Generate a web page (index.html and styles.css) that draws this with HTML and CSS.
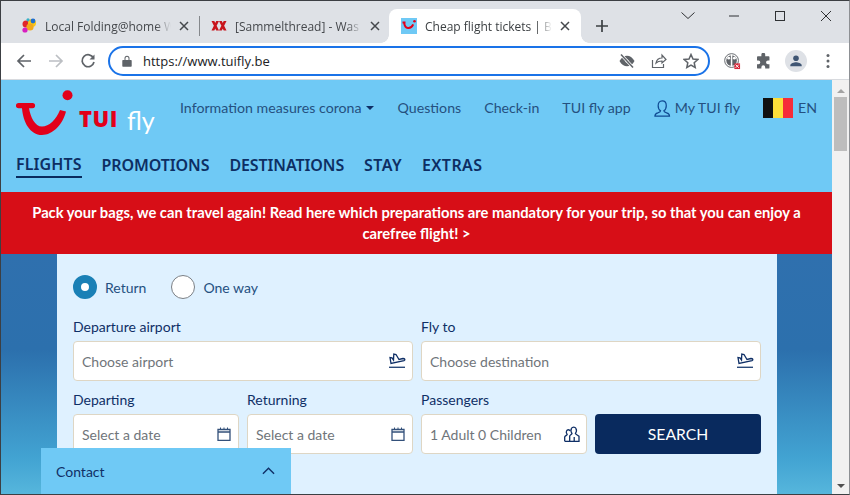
FILE: index.html
```html
<!DOCTYPE html>
<html lang="en">
<head>
<meta charset="utf-8">
<title>Cheap flight tickets</title>
<link rel="stylesheet" href="styles.css">
</head>
<body>
<div class="window">
  <div class="tabstrip">
    <div class="tab tab-one">
      <svg class="favicon" viewBox="0 0 16 16"><circle cx="5" cy="6" r="3.5" fill="#e0262a"/><circle cx="11" cy="5" r="4" fill="#f7c61a"/><circle cx="12" cy="3" r="2.4" fill="#1f6fd0"/><circle cx="9" cy="9" r="3.6" fill="#f2a91c"/><circle cx="4" cy="12" r="2.6" fill="#d81fc0"/><circle cx="7" cy="1.8" r="1.6" fill="#35b0c8"/></svg>
      <span class="tab-title">Local Folding@home Web Control</span>
      <svg class="tab-x" viewBox="0 0 10 10"><path d="M1 1l8 8M9 1l-8 8"/></svg>
    </div>
    <div class="tab-sep"></div>
    <div class="tab tab-two">
      <svg class="favicon" viewBox="0 0 16 16"><path d="M.5 3h2.800L8 12.500H5.200zM5.200 3H8L3.300 12.500H.5zM8 3h2.800l4.700 9.500h-2.800zM12.700 3h2.800l-4.700 9.500H8z" fill="#c8141c"/></svg>
      <span class="tab-title">[Sammelthread] - Was gibt es</span>
      <svg class="tab-x" viewBox="0 0 10 10"><path d="M1 1l8 8M9 1l-8 8"/></svg>
    </div>
    <div class="tab tab-active">
      <svg class="favicon" viewBox="0 0 16 16"><rect width="16" height="16" fill="#6fc9f5"/><path d="M1.500 4.500h3M3.200 4.800c.6 6.500 6.500 7 9 1.500" fill="none" stroke="#e2001a" stroke-width="2"/><circle cx="13.500" cy="3.300" r="1.300" fill="#e2001a"/></svg>
      <span class="tab-title">Cheap flight tickets | Book now</span>
      <svg class="tab-x" viewBox="0 0 10 10"><path d="M1 1l8 8M9 1l-8 8"/></svg>
    </div>
    <svg class="newtab" viewBox="0 0 12 12"><path d="M6 0v12M0 6h12"/></svg>
    <div class="winctl">
      <svg class="ctl" viewBox="0 0 46 30"><path d="M16.500 11.500l6.500 6 6.500-6" class="ctl-line"/></svg>
      <svg class="ctl" viewBox="0 0 46 30"><path d="M18 15h10" class="ctl-line"/></svg>
      <svg class="ctl" viewBox="0 0 46 30"><rect x="18.500" y="10.500" width="9" height="9" class="ctl-line"/></svg>
      <svg class="ctl" viewBox="0 0 46 30"><path d="M18 10l10 10M28 10l-10 10" class="ctl-line"/></svg>
    </div>
  </div>
  <div class="toolbar">
    <svg class="nav" viewBox="0 0 16 16"><path d="M15 8H2M8 2L2 8l6 6"/></svg>
    <svg class="nav nav-off" viewBox="0 0 16 16"><path d="M1 8h13M8 2l6 6-6 6"/></svg>
    <svg class="nav nav-last" viewBox="0 0 16 16"><path d="M13.500 5A6 6 0 1 0 14 9"/><path class="fill" d="M14.500 1.500v5h-5z"/></svg>
    <div class="omnibox">
      <svg class="lock" viewBox="0 0 10 12"><path d="M1 5h8a.7.7 0 0 1 .7.700V11a.7.7 0 0 1-.7.700H1A.7.7 0 0 1 .3 11V5.700A.7.7 0 0 1 1 5zM2.500 5V3.200a2.500 2.500 0 0 1 5 0V5H6.500V3.200a1.500 1.500 0 0 0-3 0V5z"/></svg>
      <span class="url">https://www.tuifly.be</span>
      <span class="omni-spacer"></span>
      <svg class="omni-icon" viewBox="0 0 16 16"><path d="M.5 8c2-3.700 4.700-5.300 7.500-5.300s5.500 1.600 7.500 5.300c-2 3.700-4.700 5.300-7.500 5.300S2.500 11.700.5 8z" fill="#5f6368"/><circle cx="8" cy="8" r="1.600" fill="#fff"/><path d="M2 1.500l12 13" stroke="#fff" stroke-width="3"/><path d="M2 1.500l12 13" stroke="#5f6368" stroke-width="1.500"/></svg>
      <svg class="omni-icon" viewBox="0 0 16 16"><path d="M1.500 7v7.500h11V11M5 10c.7-3.500 3-5 6-5V2l4 4.500L11 10V8c-2.500 0-4.500.5-6 2z" fill="none" stroke="#5f6368" stroke-width="1.200"/></svg>
      <svg class="omni-icon" viewBox="0 0 16 16"><path d="M8 1.500l2 4.500 4.800.5-3.600 3.200 1 4.800L8 12l-4.200 2.500 1-4.800L1.200 6.500 6 6z" fill="none" stroke="#5f6368" stroke-width="1.500"/></svg>
    </div>
    <svg class="ext ext-first" viewBox="0 0 18 18"><circle cx="8" cy="8" r="7.300" fill="#fff" stroke="#5f6368" stroke-width="1"/><circle cx="8" cy="8" r="5.600" fill="#5f6368"/><path d="M7.200 2v12h1.600V2z" fill="#fff"/><circle cx="5" cy="5.500" r="1.500" fill="#fff"/><circle cx="11" cy="5.500" r="1.500" fill="#fff"/><rect x="11" y="11" width="6" height="6" fill="#d8283a"/><path d="M12.300 12.300l3.400 3.400M15.700 12.300l-3.400 3.400" stroke="#fff"/></svg>
    <svg class="ext" viewBox="0 0 16 16"><path fill="#5f6368" d="M6 1.500a1.800 1.800 0 0 1 3.600 0V3h3.200a.8.800 0 0 1 .8.800V7h-1.400a1.800 1.800 0 0 0 0 3.600h1.400v3.200a.8.800 0 0 1-.8.800H9.600v-1.300a1.800 1.800 0 0 0-3.600 0v1.300H2.700a.8.800 0 0 1-.8-.8v-3.200h1.300a1.800 1.800 0 0 0 0-3.600H1.900V3.800a.8.800 0 0 1 .8-.8H6z"/></svg>
    <div class="avatar"><svg viewBox="0 0 16 16"><circle cx="8" cy="4.800" r="3.200" fill="#3f5573"/><path d="M1.500 14v-1c0-2.300 4.300-3.500 6.500-3.500s6.500 1.200 6.500 3.500v1z" fill="#3f5573"/></svg></div>
    <svg class="kebab" viewBox="0 0 4 16"><circle cx="2" cy="2.500" r="1.500"/><circle cx="2" cy="8" r="1.500"/><circle cx="2" cy="13.500" r="1.500"/></svg>
  </div>
  <div class="viewport">
    <div class="page">
      <header class="site-head">
        <div class="head-top">
          <div class="logo">
            <svg class="logo-mark" viewBox="0 0 57 46"><path fill="#e2001a" d="M2.500 13H16.500a2.600 2.600 0 0 1 0 5.200H13C14.500 27 19 36.500 26 36.500C33 36.500 40 30 44 20L50 21.500C47 34 37 45 26 45C14 45 7 32 6 18.200H2.500a2.600 2.600 0 0 1 0-5.200z"/><circle cx="51.500" cy="5.200" r="5" fill="#e2001a"/></svg>
            <span class="logo-tui">TUI</span><span class="logo-fly">fly</span>
          </div>
          <nav class="topnav">
            <span class="caret-item">Information measures corona<i class="caret"></i></span>
            <span>Questions</span>
            <span>Check-in</span>
            <span>TUI fly app</span>
            <span class="mytui"><svg viewBox="0 0 18 18"><path d="M1 17c0-1.800.8-2.600 3-3.300 2-.7 3-1.200 3-2.200-1.500-1-2.600-3-2.600-5.500C4.400 3 6 1 8.700 1S13 3 13 6c0 2.500-1.100 4.500-2.600 5.500 0 1 1 1.500 3 2.200 2.200.7 3 1.500 3 3.300z" fill="none" stroke="#0f4a93" stroke-width="1.300"/></svg>My TUI fly</span>
            <span class="lang"><span class="flag"><i class="fb"></i><i class="fy"></i><i class="fr"></i></span>EN</span>
          </nav>
        </div>
        <nav class="mainnav">
          <span class="current">FLIGHTS</span>
          <span>PROMOTIONS</span>
          <span>DESTINATIONS</span>
          <span class="wide">STAY</span>
          <span class="wide">EXTRAS</span>
        </nav>
      </header>
      <div class="banner">Pack your bags, we can travel again! Read here which preparations are mandatory for your trip, so that you can enjoy a carefree flight! &gt;</div>
      <main class="hero">
        <form class="panel">
          <div class="radios">
            <label class="radio"><i class="dot dot-on"></i>Return</label>
            <label class="radio"><i class="dot"></i>One way</label>
          </div>
          <div class="row">
            <div class="field">
              <div class="label">Departure airport</div>
              <div class="input"><span>Choose airport</span>
                <svg class="ico" viewBox="0 0 18 16"><path d="M1 14.300h16" stroke="#2b4a7a" stroke-width="1.400"/><path d="M3 10.500L2 4.500l2 .4L5.500 7 5.800 1l2.200.5L11 6.500 15 5.500c2 0 2.500 1.500 1 2.200z" stroke="#0f2f66" stroke-width="1.300"/></svg>
              </div>
            </div>
            <div class="field">
              <div class="label">Fly to</div>
              <div class="input"><span>Choose destination</span>
                <svg class="ico" viewBox="0 0 18 16"><path d="M1 14.300h16" stroke="#2b4a7a" stroke-width="1.400"/><path d="M3 10.500L2 4.500l2 .4L5.500 7 5.800 1l2.200.5L11 6.500 15 5.500c2 0 2.500 1.500 1 2.200z" stroke="#0f2f66" stroke-width="1.300"/></svg>
              </div>
            </div>
          </div>
          <div class="row">
            <div class="field field-pair">
              <div class="field">
                <div class="label">Departing</div>
                <div class="input"><span>Select a date</span>
                  <svg class="ico ico-cal" viewBox="0 0 14 14"><path d="M1 2.500h12v11H1zM1 5h12" fill="none" stroke="#33507a" stroke-width="1.300"/><path d="M3.500.5v2M7 .5v2M10.500.5v2" stroke="#33507a"/></svg>
                </div>
              </div>
              <div class="field">
                <div class="label">Returning</div>
                <div class="input"><span>Select a date</span>
                  <svg class="ico ico-cal" viewBox="0 0 14 14"><path d="M1 2.500h12v11H1zM1 5h12" fill="none" stroke="#33507a" stroke-width="1.300"/><path d="M3.500.5v2M7 .5v2M10.500.5v2" stroke="#33507a"/></svg>
                </div>
              </div>
            </div>
            <div class="field field-pair">
              <div class="field">
                <div class="label">Passengers</div>
                <div class="input"><span>1 Adult 0 Children</span>
                  <svg class="ico ico-pax" viewBox="0 0 16 16"><path d="M.7 15.300V11c0-1 2-1.500 2.500-2.500C2.500 7.500 2 6 2.500 5c.7-1.700 3-1.700 3.700 0" stroke="#0f2f66" stroke-width="1.300"/><path d="M5.700 15.300V10c0-1 2-1.500 2.300-2.500C7 6 6.800 3.500 7.500 2.300c.9-1.700 3.500-1.700 4.400 0 .7 1.200.5 3.700-.5 5.200.3 1 2.300 1.500 3.600 2.700v5.100zM.7 15.300h5M10.200 11v4.300" stroke="#0f2f66" stroke-width="1.300"/></svg>
                </div>
              </div>
              <div class="field field-btn"><button type="button" class="search">SEARCH</button></div>
            </div>
          </div>
        </form>
      </main>
      <div class="contact"><span>Contact</span><svg viewBox="0 0 14 8"><path d="M1 7l6-6 6 6"/></svg></div>
    </div>
    <div class="scrollbar">
      <i class="sb-up"></i>
      <div class="sb-thumb"></div>
      <i class="sb-down"></i>
    </div>
  </div>
</div>
</body>
</html>
```
FILE: styles.css
```css
* { box-sizing: border-box; }
html, body { margin: 0; height: 100%; overflow: hidden; }
body { font-family: "Lato", sans-serif; color: #0f2f66; }

.window { width: 850px; height: 495px; display: flex; flex-direction: column; border: 1px solid #3c3f43; border-right-color: #8d9094; overflow: hidden; background: #fff; }

.tabstrip { height: 42px; flex: none; background: #dee1e6; display: flex; align-items: flex-end; padding-left: 7px; position: relative; }
.tab { height: 34px; display: flex; align-items: center; font-family: "Open Sans", sans-serif; font-size: 12px; color: #45484c; }
.tab-one { width: 191px; padding: 0 10px 0 13px; }
.tab-two { width: 189px; padding: 0 9px 0 11px; }
.tab-active { background: #fff; border-radius: 8px 8px 0 0; width: 192px; color: #3c4043; padding: 0 11px 0 12px; position: relative; }
.tab-active::before, .tab-active::after { content: ""; position: absolute; bottom: 0; width: 8px; height: 8px; }
.tab-active::before { left: -8px; background: radial-gradient(circle at 0 0, #dee1e6 7.500px, #fff 8px); }
.tab-active::after { right: -8px; background: radial-gradient(circle at 100% 0, #dee1e6 7.500px, #fff 8px); }
.tab-sep { width: 1px; height: 20px; background: #85888c; margin-bottom: 7px; flex: none; }
.favicon { width: 16px; height: 16px; flex: none; margin-right: 8px; }
.tab-title { flex: 1; min-width: 0; white-space: nowrap; overflow: hidden; -webkit-mask-image: linear-gradient(to right, #000 88%, transparent 100%); mask-image: linear-gradient(to right, #000 88%, transparent 100%); }
.tab-x { width: 10px; height: 10px; flex: none; margin-left: 8px; fill: none; stroke: #45484c; stroke-width: 1.500; }
.newtab { width: 12px; height: 12px; margin: 0 0 11px 15px; fill: none; stroke: #3c4043; stroke-width: 1.700; flex: none; }
.winctl { position: absolute; right: 0; top: 0; display: flex; }
.ctl { width: 46px; height: 30px; display: block; }
.ctl-line { fill: none; stroke: #2f3134; stroke-width: 1; }

.toolbar { height: 37px; flex: none; background: #fff; display: flex; align-items: center; padding: 0 11px 0 15px; border-bottom: 1px solid #d8dade; }
.nav { width: 16px; height: 16px; fill: none; stroke: #5f6368; stroke-width: 1.700; margin-right: 16px; flex: none; }
.nav .fill { fill: #5f6368; stroke: none; }
.nav-off { stroke: #bcbfc3; }
.nav-last { margin-right: 12px; }
.omnibox { width: 602px; height: 30px; border: 2px solid #1a73e8; border-radius: 15px; display: flex; align-items: center; padding: 0 9px 0 12px; flex: none; margin-right: 14px; }
.lock { width: 10px; height: 12px; fill: #5f6368; flex: none; margin-right: 11px; }
.url { font-family: "Open Sans", sans-serif; font-size: 13px; color: #202124; }
.omni-spacer { flex: 1; }
.omni-icon { width: 16px; height: 16px; flex: none; margin-left: 16px; }
.ext { width: 17px; height: 17px; flex: none; margin-left: 14px; }
.ext-first { margin-left: 0; }
.avatar { width: 22px; height: 22px; flex: none; border-radius: 50%; background: #dee1e6; margin-left: 13px; padding: 4px; display: flex; }
.kebab { width: 4px; height: 16px; fill: #5f6368; flex: none; margin-left: 19px; }

.viewport { flex: 1; min-height: 0; display: flex; }
.page { flex: 1; min-width: 0; position: relative; display: flex; flex-direction: column; overflow: hidden; }

.site-head { height: 112px; flex: none; background: #6fc9f5; padding: 0 15px; }
.head-top { height: 64px; display: flex; align-items: flex-start; }
.logo { width: 164px; height: 64px; flex: none; position: relative; }
.logo-mark { position: absolute; left: 0; top: 10px; width: 57px; height: 46px; }
.logo-tui { position: absolute; left: 63px; top: 25px; font-family: "Open Sans", sans-serif; font-weight: 800; font-size: 22px; letter-spacing: .6px; line-height: 26px; color: #e2001a; }
.logo-fly { position: absolute; left: 111px; top: 26px; font-family: "Lato", sans-serif; font-size: 25px; line-height: 28px; color: #fff; }
.topnav { flex: 1; display: flex; align-items: center; gap: 23px; padding-top: 15px; font-size: 14.200px; line-height: 26px; color: #25507f; white-space: nowrap; }
.caret-item { display: flex; align-items: center; }
.caret { width: 0; height: 0; border: 4px solid transparent; border-top-color: #0f2f66; border-bottom: 0; margin: 0 1px 0 4px; }
.mytui { display: flex; align-items: center; gap: 4px; }
.mytui svg { width: 17px; height: 17px; }
.lang { display: flex; align-items: center; gap: 5px; }
.flag { display: flex; width: 30px; height: 20px; }
.flag i { flex: 1; }
.fb { background: #111; }
.fy { background: #fddf3a; }
.fr { background: #f62c39; }
.mainnav { display: flex; gap: 20px; font-family: "Noto Sans", sans-serif; font-size: 16px; font-weight: 600; letter-spacing: -.1px; line-height: 26px; padding-top: 8px; color: #0d2e63; }
.current { border-bottom: 2px solid #092a5e; height: 26px; line-height: 25px; letter-spacing: .1px; }
.wide { letter-spacing: .4px; }

.banner { height: 62px; flex: none; background: #d70e17; color: #fff; font-size: 14.740px; font-weight: 700; line-height: 21px; text-align: center; padding: 10px 20px 0; }

.hero { flex: 1; min-height: 0; background: linear-gradient(to bottom, #2f70ae 0%, #2c70ad 40%, #42a3d2 85%, #56b6dc 100%); padding: 0 55px 0 56px; }
.panel { background: #dff1ff; height: 100%; padding: 20px 16px 0; }
.radios { display: flex; gap: 25px; height: 26px; margin-bottom: 18px; }
.radio { display: flex; align-items: center; gap: 8px; font-size: 14px; color: #25507f; }
.dot { width: 24px; height: 24px; border-radius: 50%; background: #fff; border: 1.500px solid #7a7f85; display: block; }
.dot-on { border: 8px solid #1a80b6; }
.row { display: grid; grid-template-columns: 340px 340px; gap: 8px; }
.field-pair { display: grid; grid-template-columns: 166px 166px; gap: 8px; }
.label { font-size: 14px; line-height: 18px; height: 23px; color: #0f2f66; }
.input { height: 40px; background: #fff; border: 1px solid #ded6c4; border-radius: 4px; display: flex; align-items: center; justify-content: space-between; padding: 0 6px 0 8px; font-size: 14px; color: #70757a; margin-bottom: 10px; white-space: nowrap; }
.ico { width: 18px; height: 16px; flex: none; fill: none; }
.ico-cal { width: 14px; height: 14px; margin-right: 1px; }
.ico-pax { width: 16px; height: 16px; }
.field-btn { padding-top: 23px; }
.search { width: 100%; height: 40px; border: 0; border-radius: 4px; background: #092a5e; color: #fff; font-family: "Lato", sans-serif; font-size: 15.700px; padding: 0; }

.contact { position: absolute; left: 40px; bottom: 0; width: 250px; height: 46px; background: #6fc9f5; display: flex; align-items: center; justify-content: space-between; padding: 0 16px 0 15px; font-size: 14px; color: #0f2f66; }
.contact svg { width: 13px; height: 8px; fill: none; stroke: #0f2f66; stroke-width: 1.500; }

.scrollbar { width: 17px; flex: none; background: #f1f1f1; display: flex; flex-direction: column; align-items: center; padding-top: 9px; position: relative; }
.sb-up { width: 0; height: 0; border: 4px solid transparent; border-bottom-color: #a3a3a3; border-top: 0; }
.sb-thumb { width: 13px; height: 54px; background: #bdbdbd; margin-top: 4px; }
.sb-down { position: absolute; bottom: 6px; left: 5px; width: 0; height: 0; border: 4px solid transparent; border-top-color: #505050; border-bottom: 0; }
```
